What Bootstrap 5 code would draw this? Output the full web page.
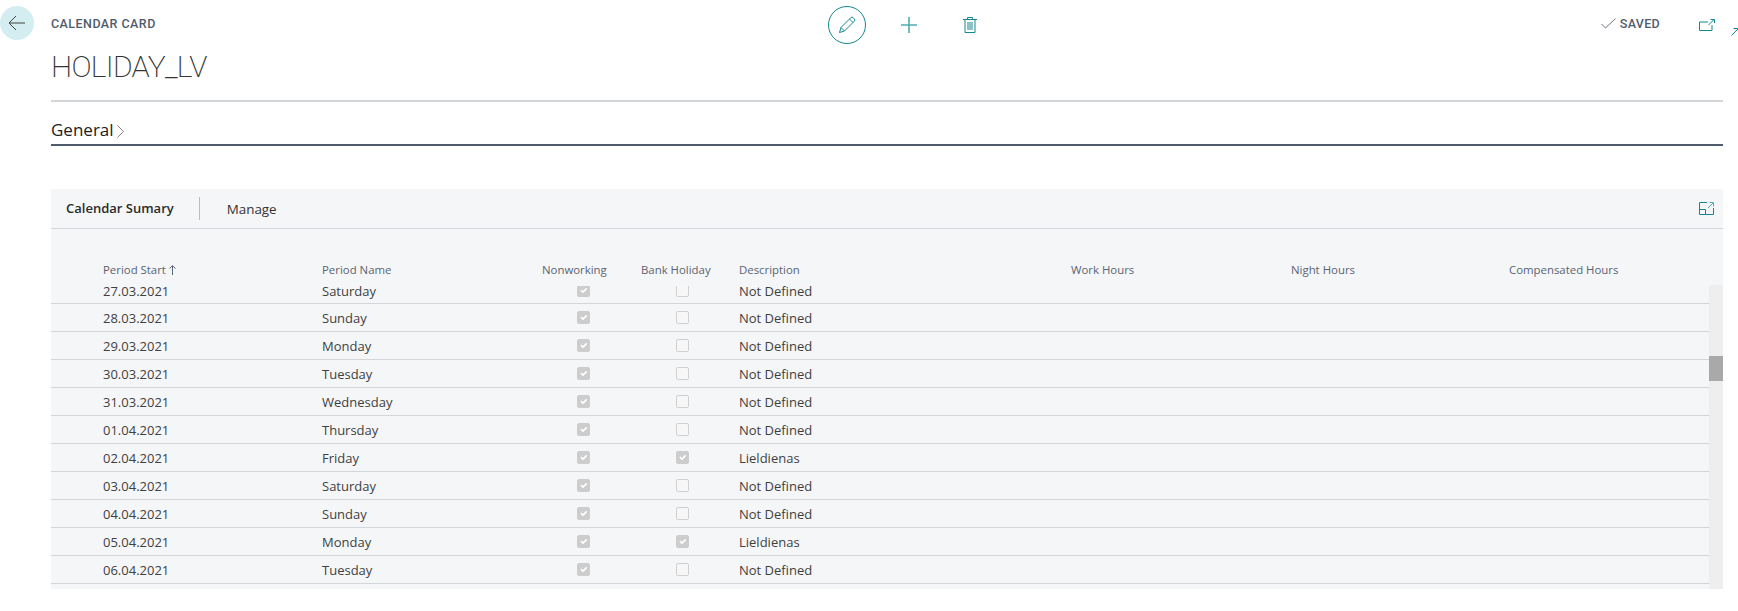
<!DOCTYPE html>
<html lang="en">
<head>
    <meta charset="UTF-8">
    <title>Calendar Card</title>
    <link rel="stylesheet" href="https://cdn.jsdelivr.net/npm/bootstrap@5.3.0/dist/css/bootstrap.min.css">
    <style>
        body { background: #fff; font-family: "Open Sans", "Noto Sans", sans-serif; color: #333; overflow: hidden; }
        svg { display: block; }

        .top-row { height: 46px; }
        .back-btn { width: 34px; height: 34px; border-radius: 50%; background: #d3edf1; flex: none; }
        .caption { margin-left: 17px; width: 777px; font: 500 12.5px Roboto, sans-serif; letter-spacing: .45px; color: #505c6d; flex: none; }
        .edit-btn { width: 38px; height: 38px; margin-top: 4px; border: 1px solid #14878f; border-radius: 50%; flex: none; }
        .add-btn { margin-left: 35px; margin-top: 4px; flex: none; }
        .del-btn { margin-left: 46px; margin-top: 4px; flex: none; }
        .saved { font: 500 12.5px Roboto, sans-serif; letter-spacing: .3px; color: #505c6d; margin-right: 39px; }
        .popout { margin-top: 3px; margin-right: 16px; }
        .stray { margin-top: 18px; margin-right: -1px; }

        .page-name { margin: 0 0 0 51px; font: 200 30px/41px Roboto, sans-serif; letter-spacing: -.7px; color: #333; height: 54px; }
        .main-area { margin: 0 15px 0 51px; }
        .title-line { border-top: 2px solid #d2d6d9; }
        .general { height: 44px; border-bottom: 2px solid #505c6d; font-size: 17px; font-weight: 500; color: #212121; gap: 3px; padding-bottom: 2px; }

        .cal-panel { margin-top: 43px; height: 400px; background: #f5f6f8; }
        .cal-bar { height: 40px; border-bottom: 1px solid #d4d6de; padding-left: 15px; font-size: 13px; }
        .cal-bar b { font-weight: 600; color: #2b2b2b; }
        .cal-bar span { font-size: 13.4px; padding-top: 2px; }
        .bar-sep { width: 1px; height: 23px; background: #b9bcc0; margin: 0 27px 0 25px; }
        .expand { margin-left: auto; margin-right: 9px; }

        .cal-grid { display: grid; grid-template-columns: 219px 220px 99px 98px 332px 220px 218px 1fr; padding-left: 52px; }
        .cal-head { height: 56px; align-items: end; padding-bottom: 7px; font-size: 11.4px; color: #5a6472; }
        .cal-head span { line-height: 16px; }
        .sort-up { display: inline-block; vertical-align: -1px; margin-left: 3px; }
        .cal-scroll { height: 304px; }
        .cal-rows { flex: 1; }
        .cal-row { height: 28px; align-items: center; border-bottom: 1px solid #d3d5d8; font-size: 13px; line-height: 12px; color: #3f3f3f; padding-top: 1px; }
        .check-cell { padding-left: 35px; display: flex; margin-bottom: 2px; }
        .check-cell .form-check-input { width: 13px; height: 13px; margin: 0; opacity: 1; border: 1px solid #d0d0d0; border-radius: 2px; background-color: #f7f7f8; flex: none; }
        .check-cell .form-check-input:checked { background-color: #cdcdcd; border-color: #cdcdcd; }
        /* first row is scrolled partly under the header: only its checkboxes get cut */
        .cal-row:first-child { height: 19px; padding-top: 0; padding-bottom: 7px; align-items: end; }
        .cal-row:first-child .check-cell { height: 11px; margin-bottom: 0; overflow: hidden; align-items: flex-end; }
        .sbar { width: 14px; background: #eee; flex: none; }
        .sbar-thumb { height: 25px; margin-top: 71px; background: #a9a9a9; }
    </style>
</head>
<body>

    <div class="d-flex align-items-center top-row">
        <div class="back-btn d-flex align-items-center justify-content-center">
            <svg width="18" height="16" viewBox="0 0 18 16" fill="none" stroke="#444" stroke-width="1"><path d="M17 8H1M8 1 1 8l7 7"/></svg>
        </div>
        <div class="caption">CALENDAR CARD</div>
        <div class="edit-btn d-flex align-items-center justify-content-center">
            <svg width="18" height="18" viewBox="0 0 18 18" fill="none" stroke="#14878f" stroke-width="1"><path d="M1.5 16.5 3 11.5 12.8 1.7a1.6 1.6 0 0 1 2.3 0l1.2 1.2a1.6 1.6 0 0 1 0 2.3L6.5 15zM3 11.5 6.5 15M11.5 3l3.5 3.5"/></svg>
        </div>
        <div class="add-btn">
            <svg width="16" height="16" viewBox="0 0 16 16" fill="none" stroke="#52adb3" stroke-width="1.6"><path d="M8 0V16M0 8H16"/></svg>
        </div>
        <div class="del-btn">
            <svg width="14" height="16" viewBox="0 0 14 16" fill="none" stroke="#14878f" stroke-width="1"><path d="M0 2.5H14M2 2.5V15.5H12V2.5M4.5 2.5V.5H9.5V2.5M5 5V13M7 5V13M9 5V13"/></svg>
        </div>
        <div class="ms-auto d-flex align-items-center gap-1 saved">
            <svg width="15" height="11" viewBox="0 0 15 11" fill="none" stroke="#6b7482" stroke-width="1"><path d="M.5 6 4.5 10 14.5 .5"/></svg>
            <span>SAVED</span>
        </div>
        <div class="popout">
            <svg width="16" height="12" viewBox="0 0 16 12" fill="none" stroke="#14878f" stroke-width="1"><path d="M9 3H.5V11.5H13V6"/><path d="M9.5 6 15 .5M11.5 .5H15.5V4"/></svg>
        </div>
        <div class="stray">
            <svg width="8" height="8" viewBox="0 0 8 8" fill="none" stroke="#14878f" stroke-width="1"><path d="M.5 7.5 7.5 .5M2.5 .5H7.5V5.5"/></svg>
        </div>
    </div>

    <h1 class="page-name">HOLIDAY_LV</h1>

    <div class="main-area">
        <div class="title-line"></div>
        <div class="general d-flex align-items-end">
            <span>General</span>
            <svg class="mb-1" width="7" height="13" viewBox="0 0 7 13" fill="none" stroke="#777" stroke-width=".9"><path d="M.5 .5 6.5 6.5 .5 12.5"/></svg>
        </div>

        <div class="cal-panel">
            <div class="cal-bar d-flex align-items-center">
                <b>Calendar Sumary</b>
                <div class="bar-sep"></div>
                <span>Manage</span>
                <svg class="expand" width="15" height="13" viewBox="0 0 15 13" fill="none" stroke="#14878f" stroke-width="1"><path d="M14.5 6V12.5H.5V.5H8M.5 7.5H6.5V12.5"/><path d="M9 6 14 1M10.5 .5H14.5V4.5" stroke="#52adb3"/></svg>
            </div>

            <div class="cal-grid cal-head">
                <span>Period Start<svg class="sort-up" width="7" height="10" viewBox="0 0 7 10" fill="none" stroke="#5a6472"><path d="M3.5 10V1M.5 3.5 3.5 .7 6.5 3.5"/></svg></span>
                <span>Period Name</span>
                <span>Nonworking</span>
                <span>Bank Holiday</span>
                <span>Description</span>
                <span>Work Hours</span>
                <span>Night Hours</span>
                <span>Compensated Hours</span>
            </div>

            <div class="cal-scroll d-flex">
                <div class="cal-rows" id="calRows"></div>
                <div class="sbar"><div class="sbar-thumb"></div></div>
            </div>
        </div>
    </div>

    <script src="https://cdn.jsdelivr.net/npm/bootstrap@5.3.0/dist/js/bootstrap.bundle.min.js"></script>
    <script>
        let days = [
            ["27.03.2021", "Saturday", false, "Not Defined"],
            ["28.03.2021", "Sunday", false, "Not Defined"],
            ["29.03.2021", "Monday", false, "Not Defined"],
            ["30.03.2021", "Tuesday", false, "Not Defined"],
            ["31.03.2021", "Wednesday", false, "Not Defined"],
            ["01.04.2021", "Thursday", false, "Not Defined"],
            ["02.04.2021", "Friday", true, "Lieldienas"],
            ["03.04.2021", "Saturday", false, "Not Defined"],
            ["04.04.2021", "Sunday", false, "Not Defined"],
            ["05.04.2021", "Monday", true, "Lieldienas"],
            ["06.04.2021", "Tuesday", false, "Not Defined"]
        ];

        let box = document.getElementById("calRows");
        for (let d of days) {
            box.insertAdjacentHTML("beforeend", `
                <div class="cal-grid cal-row">
                    <span>${d[0]}</span>
                    <span>${d[1]}</span>
                    <div class="check-cell"><input type="checkbox" class="form-check-input" checked disabled></div>
                    <div class="check-cell"><input type="checkbox" class="form-check-input" ${d[2] ? "checked" : ""} disabled></div>
                    <span>${d[3]}</span>
                </div>`);
        }
    </script>
</body>
</html>
